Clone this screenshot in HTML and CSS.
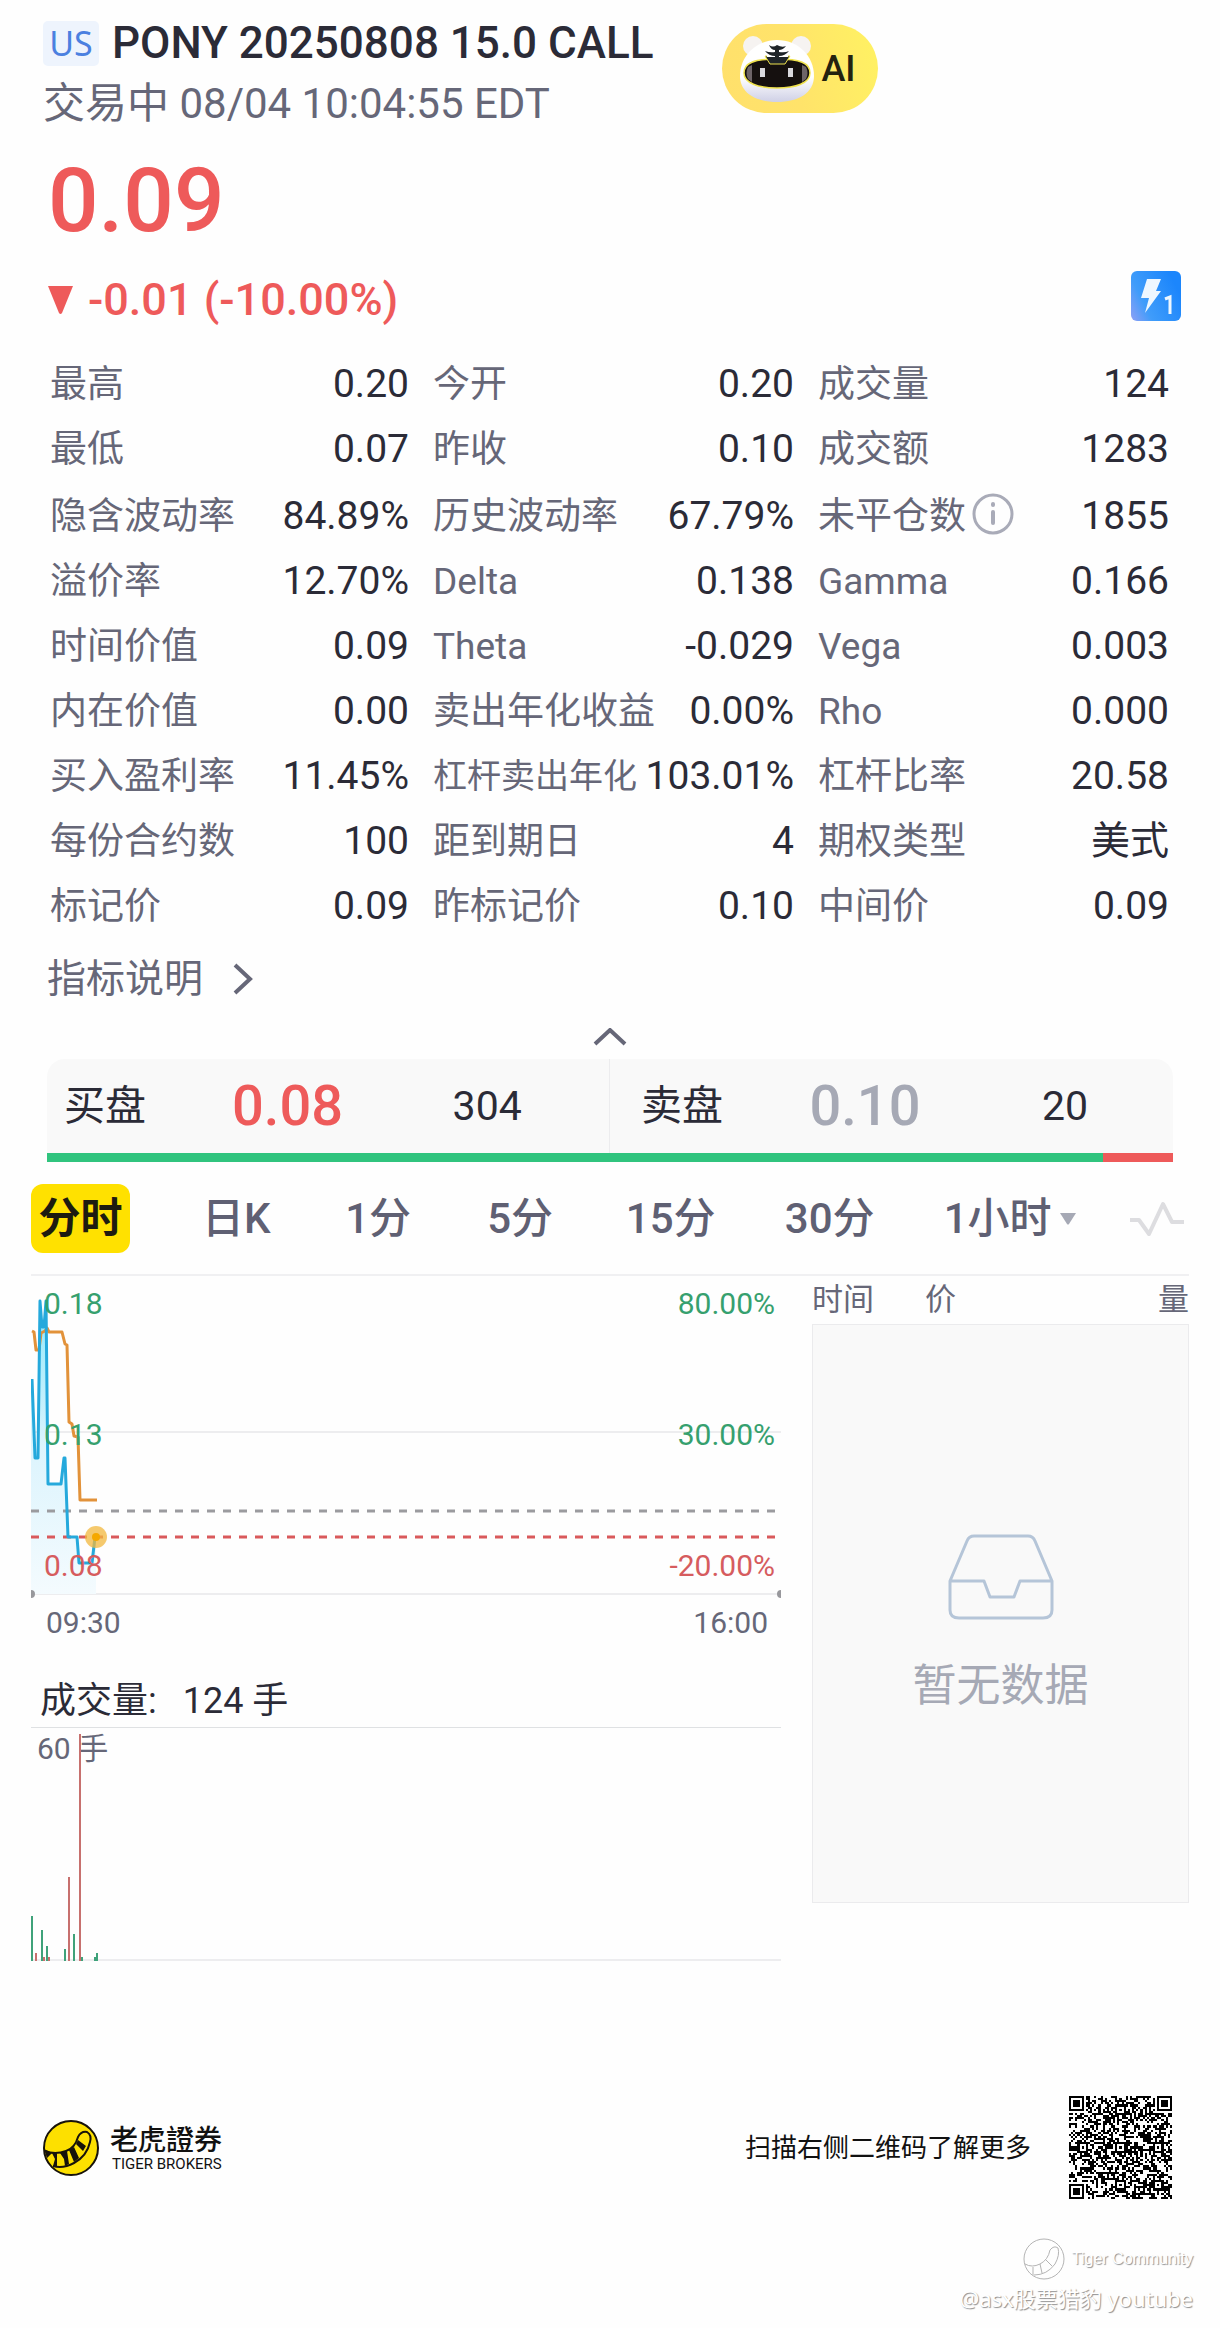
FILE: index.html
```html
<!DOCTYPE html>
<html lang="zh-CN">
<head>
    <meta charset="UTF-8">
    <meta name="viewport" content="width=device-width, initial-scale=1.0">
    <title>PONY 20250808 15.0 CALL</title>
    <link rel="stylesheet" href="styles.css">
</head>
<body>
    <header class="header">
        <div class="heading">
            <h1 class="title"><span class="market">US</span>PONY 20250808 15.0 CALL</h1>
            <p class="status">交易中 08/04 10:04:55 EDT</p>
        </div>
        <button class="ai-button" type="button">
            <svg class="ai-face" viewBox="0 0 74 66" aria-hidden="true">
                <defs>
                    <linearGradient id="face" x1="0" y1="0" x2="0" y2="1">
                        <stop offset="0.6" stop-color="#ffffff"/>
                        <stop offset="1" stop-color="#cfd0e6"/>
                    </linearGradient>
                </defs>
                <circle cx="13" cy="10" r="10" fill="#f6f3f1"/>
                <circle cx="61" cy="10" r="10" fill="#f6f3f1"/>
                <path d="M37 4C58 4 74 20 74 40C74 57 58 66 37 66C16 66 0 57 0 40C0 20 16 4 37 4Z" fill="url(#face)"/>
                <path d="M37 23C60 23 70 27 70 37C70 47 56 52 37 52C18 52 4 47 4 37C4 27 14 23 37 23Z" fill="#15100f" stroke="#efe24e" stroke-width="1.5"/>
                <path d="M25 20L30 28H45L50 20Z" fill="#1f2428" stroke="#efe24e" stroke-width="1"/>
                <path d="M27 19H48V21H27Z" fill="#fff"/>
                <path d="M29 9Q33 12 37 9Q42 12 46 10Q43 14 39 14V16Q45 17 49 15Q45 20 39 20V24H35V20Q29 20 25 15Q30 17 35 16V14Q31 14 29 9Z" fill="#1f2428"/>
                <path d="M8 31Q5 37 8 43L12 46V29ZM66 31Q69 37 66 43L62 46V29Z" fill="#6d6468"/>
                <rect x="20" y="32" width="5" height="9" fill="#d9d9dd"/>
                <rect x="48" y="32" width="5" height="9" fill="#d9d9dd"/>
            </svg>
            AI
        </button>
    </header>

    <section class="quote">
        <p class="price">0.09</p>
        <div class="change-row">
            <p class="change">
                <svg class="down" viewBox="0 0 25 28" aria-hidden="true"><path d="M0 0H25L14 27Q12.500 29 11 27Z"/></svg>
                -0.01 (-10.00%)
            </p>
            <svg class="level" viewBox="0 0 50 50" role="img" aria-label="L1">
                <defs>
                    <linearGradient id="level-bg" x1="0" y1="1" x2="1" y2="0.500">
                        <stop offset="0" stop-color="#8fa0f5"/>
                        <stop offset="0.350" stop-color="#3f9cfa"/>
                        <stop offset="1" stop-color="#1c86fc"/>
                    </linearGradient>
                </defs>
                <rect width="50" height="50" rx="6" fill="url(#level-bg)"/>
                <path d="M16 8H30L25 20H30L14 42L18 27H10Z" fill="#eef7ff"/>
                <path d="M34 28L39 26V43" fill="none" stroke="#eef7ff" stroke-width="3"/>
            </svg>
        </div>
    </section>

    <dl class="stats">
        <div><dt>最高</dt><dd>0.20</dd></div>
        <div><dt>今开</dt><dd>0.20</dd></div>
        <div><dt>成交量</dt><dd>124</dd></div>
        <div><dt>最低</dt><dd>0.07</dd></div>
        <div><dt>昨收</dt><dd>0.10</dd></div>
        <div><dt>成交额</dt><dd>1283</dd></div>
        <div><dt>隐含波动率</dt><dd>84.89%</dd></div>
        <div><dt>历史波动率</dt><dd>67.79%</dd></div>
        <div class="with-info">
            <dt>未平仓数<svg class="info" viewBox="0 0 42 42" aria-hidden="true"><circle cx="21" cy="21" r="19"/><path d="M21 19V30" stroke-width="4"/><path d="M21 11V12" stroke-width="4"/></svg></dt>
            <dd>1855</dd>
        </div>
        <div><dt>溢价率</dt><dd>12.70%</dd></div>
        <div><dt>Delta</dt><dd>0.138</dd></div>
        <div><dt>Gamma</dt><dd>0.166</dd></div>
        <div><dt>时间价值</dt><dd>0.09</dd></div>
        <div><dt>Theta</dt><dd>-0.029</dd></div>
        <div><dt>Vega</dt><dd>0.003</dd></div>
        <div><dt>内在价值</dt><dd>0.00</dd></div>
        <div><dt>卖出年化收益</dt><dd>0.00%</dd></div>
        <div><dt>Rho</dt><dd>0.000</dd></div>
        <div><dt>买入盈利率</dt><dd>11.45%</dd></div>
        <div><dt class="long">杠杆卖出年化</dt><dd>103.01%</dd></div>
        <div><dt>杠杆比率</dt><dd>20.58</dd></div>
        <div><dt>每份合约数</dt><dd>100</dd></div>
        <div><dt>距到期日</dt><dd>4</dd></div>
        <div><dt>期权类型</dt><dd>美式</dd></div>
        <div><dt>标记价</dt><dd>0.09</dd></div>
        <div><dt>昨标记价</dt><dd>0.10</dd></div>
        <div><dt>中间价</dt><dd>0.09</dd></div>
    </dl>

    <a class="explain" href="#">指标说明
        <svg viewBox="0 0 20 32" aria-hidden="true"><path d="M2 2L17 16L2 30"/></svg>
    </a>
    <button class="collapse" type="button" aria-label="收起">
        <svg viewBox="0 0 34 18" aria-hidden="true"><path d="M2 16L17 2L32 16"/></svg>
    </button>

    <section class="book">
        <div class="sides">
            <div class="side bid"><span>买盘</span><strong>0.08</strong><span class="qty">304</span></div>
            <div class="side ask"><span>卖盘</span><strong>0.10</strong><span class="qty">20</span></div>
        </div>
        <div class="ratio"><div class="ratio-bid" style="width: 93.8%"></div></div>
    </section>

    <nav class="tabs">
        <button class="tab active" type="button">分时</button>
        <button class="tab" type="button">日K</button>
        <button class="tab" type="button">1分</button>
        <button class="tab" type="button">5分</button>
        <button class="tab" type="button">15分</button>
        <button class="tab" type="button">30分</button>
        <button class="tab" type="button">1小时<svg class="more" viewBox="0 0 16 12" aria-hidden="true"><path d="M0 0H16L9 11Q8 12 7 11Z"/></svg></button>
        <button class="wave" type="button" aria-label="指标">
            <svg viewBox="0 0 56 38" aria-hidden="true"><path d="M1 20H10L20 34L34 4L43 22H55"/></svg>
        </button>
    </nav>

    <main class="market-data">
        <div class="charts">
            <svg class="chart" viewBox="0 0 750 365" role="img" aria-label="分时走势">
                <defs>
                    <linearGradient id="area" x1="0" y1="0" x2="0" y2="1">
                        <stop offset="0" stop-color="#8fe8fb"/>
                        <stop offset="0.500" stop-color="#dcf4fd"/>
                        <stop offset="1" stop-color="#f4fbfe"/>
                    </linearGradient>
                </defs>
                <path class="grid-line" d="M0 156H750M0 318H750"/>
                <path d="M1 103L4 182H7L9 25L11 51H13L15 25L17 208H30L33 182H34L37 261H46L48 287H61L64 261H65V318H0V103Z" fill="url(#area)"/>
                <path class="dash" d="M0 235H744" stroke="#9b9b9f"/>
                <path class="dash" d="M0 261H744" stroke="#d9595b"/>
                <path class="line" d="M1 55L3 56L5 74H8L10 57L14 55L16 52L18 56H31L34 68L36 69L38 146L41 148L43 160L47 161L49 224H66" stroke="#e2923a"/>
                <path class="line" d="M1 103L4 182H7L9 25L11 51H13L15 25L17 208H30L33 182H34L37 261H46L48 287H61L64 261" stroke="#25a9dc"/>
                <circle cx="65" cy="261" r="11" fill="#f2b73c" fill-opacity="0.750"/>
                <circle cx="65" cy="261" r="4" fill="#f5a800"/>
                <path d="M0 314A4 4 0 0 1 0 322ZM750 314A4 4 0 0 0 750 322Z" fill="#98989c"/>
                <g class="up">
                    <text x="13" y="38">0.18</text>
                    <text x="13" y="169">0.13</text>
                    <text class="end" x="744" y="38">80.00%</text>
                    <text class="end" x="744" y="169">30.00%</text>
                </g>
                <g class="fall">
                    <text x="13" y="300">0.08</text>
                    <text class="end" x="744" y="300">-20.00%</text>
                </g>
                <g class="axis">
                    <text x="15" y="357">09:30</text>
                    <text class="end" x="737" y="357">16:00</text>
                </g>
            </svg>

            <h2 class="volume-title">成交量:<span>124 手</span></h2>
            <svg class="chart volume" viewBox="0 0 750 233" role="img" aria-label="成交量">
                <path class="grid-line" d="M0 232H750"/>
                <g class="axis"><text x="6" y="31">60 手</text></g>
                <path d="M1 233V188M11 233V202M16 233V218M34 233V221M43 233V206M51 233V229M64 233V229M66 233V225" stroke="#3fa27a" stroke-width="2"/>
                <path d="M5 233V225M13 233V229M18 233V229M38 233V149M49 233V6" stroke="#c7706e" stroke-width="2"/>
            </svg>
        </div>

        <div class="ticks">
            <table>
                <thead>
                    <tr><th scope="col">时间</th><th scope="col">价</th><th scope="col">量</th></tr>
                </thead>
            </table>
            <div class="empty">
                <svg viewBox="0 0 106 86" aria-hidden="true">
                    <path d="M2 47L19 7Q21 2 26 2H80Q85 2 87 7L104 47V76Q104 84 95 84H11Q2 84 2 76ZM2 47H36L42 63H66L72 47H104"/>
                </svg>
                <p>暂无数据</p>
            </div>
        </div>
    </main>

    <footer class="footer">
        <div class="brand">
            <svg class="logo" viewBox="0 0 56 56" aria-hidden="true">
                <circle cx="28" cy="28" r="27" fill="#fde000" stroke="#17130a" stroke-width="2"/>
                <path d="M2 31Q12 35 23 31Q32 28 35 17Q38 11 44 12Q49 15 47 22Q44 36 31 43Q20 49 10 46" fill="none" stroke="#17130a" stroke-width="2"/>
                <path d="M1 29L9 33L4 38ZM9 33H14V46H10L12 39ZM17 33L24 31L26 44L22 46L21 39ZM26 30L31 27L36 38L31 42ZM33 24L35 20L43 26L40 31Z" fill="#17130a"/>
            </svg>
            <div class="brand-name">
                <p class="brand-cn" lang="zh-TW">老虎證券</p>
                <p class="brand-en">TIGER BROKERS</p>
            </div>
        </div>
        <p class="scan">扫描右侧二维码了解更多</p>
        <svg class="qr" viewBox="0 0 49 49" role="img" aria-label="二维码" shape-rendering="crispEdges"><path id="qr-path"/></svg>
    </footer>

    <div class="community">
        <p class="community-name">
            <svg viewBox="0 0 44 44" aria-hidden="true">
                <circle cx="22" cy="22" r="20"/>
                <path d="M3 27Q10 31 18 27Q26 23 28 13Q32 8 36 11Q38 18 33 27Q25 38 12 38M11 30V38M18 27L20 36M24 23L30 29"/>
            </svg>
            Tiger Community
        </p>
        <p class="author">@asx股票猎豹 youtube</p>
    </div>

    <script>
        const size = 49;
        const cells = [];
        let seed = 20250808;

        function random() {
            seed = (seed * 1103515245 + 12345) % 2147483648;
            return seed / 2147483648;
        }

        for (let y = 0; y < size; y++) {
            cells.push([]);
            for (let x = 0; x < size; x++) {
                cells[y].push(random() < 0.5);
            }
        }

        // timing lines
        for (let i = 0; i < size; i++) {
            cells[6][i] = i % 2 === 0;
            cells[i][6] = i % 2 === 0;
        }

        // concentric squares, the light ring is the one at distance `gap`
        function square(cx, cy, radius, gap) {
            for (let y = cy - radius; y <= cy + radius; y++) {
                for (let x = cx - radius; x <= cx + radius; x++) {
                    if (x < 0 || y < 0 || x >= size || y >= size) continue;
                    const d = Math.max(Math.abs(x - cx), Math.abs(y - cy));
                    cells[y][x] = d !== gap && d !== 4;
                }
            }
        }

        [[24, 6], [6, 24], [24, 24], [42, 24], [24, 42], [42, 42]].forEach(([x, y]) => square(x, y, 2, 1));
        [[3, 3], [45, 3], [3, 45]].forEach(([x, y]) => square(x, y, 4, 2));

        let d = '';
        cells.forEach((row, y) => row.forEach((on, x) => {
            if (on) d += `M${x} ${y}h1v1h-1z`;
        }));
        document.getElementById('qr-path').setAttribute('d', d);
    </script>
</body>
</html>
```
FILE: styles.css
```css
* {
    box-sizing: border-box;
}

body {
    margin: 0;
    background: #fefefe;
    color: #2b2b37;
    font-family: Roboto, "Noto Sans CJK SC", sans-serif;
}

h1, h2, p, dl, dd {
    margin: 0;
}

button {
    padding: 0;
    border: 0;
    background: none;
    color: inherit;
    font-family: inherit;
    cursor: pointer;
}

svg {
    display: block;
    flex: none;
}

/* Header */
.header {
    display: flex;
    gap: 69px;
    padding: 18px 43px 0;
}

.title {
    display: flex;
    align-items: center;
    gap: 13px;
    font-size: 44px;
    font-weight: 500;
    line-height: 50px;
}

.market {
    width: 56px;
    border-radius: 5px;
    background: #eef4fd;
    color: #4b80e0;
    font-family: "Noto Sans", sans-serif;
    font-size: 34px;
    font-weight: 400;
    line-height: 45px;
    text-align: center;
}

.status {
    margin-top: 6px;
    color: #666778;
    font-size: 42px;
    line-height: 60px;
}

.ai-button {
    display: flex;
    align-items: center;
    gap: 7px;
    width: 156px;
    height: 89px;
    margin-top: 6px;
    padding-left: 18px;
    border-radius: 45px;
    background: linear-gradient(75deg, #ffe06c, #ffe36a 45%, #fff262);
    color: #24220f;
    font-size: 36px;
    font-weight: 500;
}

.ai-face {
    width: 74px;
    height: 66px;
}

/* Price */
.quote {
    padding: 19px 39px 0 48px;
    color: #ee5a5a;
}

.price {
    font-size: 89px;
    font-weight: 500;
    line-height: 96px;
}

.change-row {
    display: flex;
    justify-content: space-between;
    margin-top: 22px;
}

.change {
    display: flex;
    align-items: center;
    gap: 15px;
    font-size: 45px;
    font-weight: 500;
    line-height: 58px;
}

.down {
    width: 25px;
    height: 28px;
    fill: #ee5a5a;
}

.level {
    width: 50px;
    height: 50px;
}

/* Indicators */
.stats {
    display: grid;
    grid-template-columns: 359fr 361fr 351fr;
    column-gap: 24px;
    margin-top: 23px;
    padding: 0 51px 0 50px;
}

.stats div {
    display: flex;
    align-items: flex-end;
    justify-content: space-between;
    line-height: 65px;
    white-space: nowrap;
}

.stats dt {
    display: flex;
    align-items: center;
    color: #666778;
    font-size: 37px;
}

.stats .long {
    font-size: 34px;
}

.stats dd {
    font-size: 39px;
}

.stats .with-info {
    padding-top: 2px;
}

.info {
    width: 42px;
    height: 42px;
    margin: 0 0 5px 6px;
    fill: none;
    stroke: #a9abb8;
    stroke-width: 3;
    stroke-linecap: round;
}

.explain {
    display: flex;
    align-items: center;
    gap: 30px;
    width: max-content;
    margin: 14px 0 0 47px;
    color: #666778;
    font-size: 39px;
    line-height: 52px;
    text-decoration: none;
}

.explain svg {
    width: 20px;
    height: 32px;
}

.explain path,
.collapse path {
    fill: none;
    stroke: #666778;
    stroke-width: 4;
}

.collapse {
    display: block;
    margin: 23px auto 13px;
}

.collapse svg {
    width: 34px;
    height: 18px;
}

/* Bid and ask */
.book {
    margin: 0 47px;
}

.sides {
    display: grid;
    grid-template-columns: 1fr 1fr;
    border-radius: 18px 18px 0 0;
    background: #f9f9f9;
}

.side {
    display: grid;
    grid-template-columns: 124fr 200fr 200fr;
    font-size: 41px;
    line-height: 94px;
}

.bid {
    padding: 0 22px 0 17px;
    border-right: 1px solid #ececee;
}

.ask {
    padding: 0 8px 0 31px;
}

.side strong {
    font-size: 56px;
    font-weight: 500;
    text-align: center;
}

.bid strong {
    color: #ee5a5a;
}

.ask strong {
    color: #a6a9b5;
}

.qty {
    text-align: center;
}

.ratio {
    height: 9px;
    background: #ee5a5a;
}

.ratio-bid {
    height: 100%;
    background: #30c47e;
}

/* Period tabs */
.tabs {
    display: flex;
    align-items: center;
    gap: 70px;
    margin: 22px 31px 0;
    padding-bottom: 21px;
    border-bottom: 2px solid #f0f0f2;
}

.tab {
    display: flex;
    align-items: center;
    justify-content: center;
    gap: 8px;
    min-width: 72px;
    color: #5f6073;
    font-size: 42px;
    font-weight: 500;
    line-height: 69px;
    white-space: nowrap;
}

.tab.active {
    width: 100px;
    border-radius: 12px;
    background: #ffe100;
    color: #1d1b10;
    font-weight: 700;
}

.more {
    width: 16px;
    height: 12px;
    fill: #a6a9b5;
}

.wave {
    margin: 0 4px 0 -16px;
}

.wave svg {
    width: 56px;
    height: 38px;
    fill: none;
    stroke: #dddde0;
    stroke-width: 4;
    stroke-linejoin: round;
}

/* Charts */
.market-data {
    display: grid;
    grid-template-columns: 750fr 377fr;
    align-items: start;
    column-gap: 31px;
    margin: 0 31px;
}

.chart {
    width: 100%;
    height: auto;
    font-size: 30px;
}

.grid-line {
    stroke: #ededef;
    stroke-width: 2;
}

.dash {
    stroke-width: 3;
    stroke-dasharray: 8 8;
}

.line {
    fill: none;
    stroke-width: 3;
    stroke-linejoin: round;
}

.end {
    text-anchor: end;
}

.up {
    fill: #36a06e;
}

.fall {
    fill: #d65c5e;
}

.axis {
    fill: #666778;
}

.volume-title {
    display: flex;
    gap: 26px;
    margin-top: 34px;
    padding-left: 9px;
    font-size: 36px;
    font-weight: 400;
    line-height: 52px;
}

.volume {
    border-top: 1px solid #dfe1e3;
}

.ticks table {
    width: 100%;
    border-collapse: collapse;
    table-layout: fixed;
    color: #666778;
    font-size: 31px;
    line-height: 48px;
}

.ticks th {
    padding: 0;
    font-weight: 400;
    text-align: left;
}

.ticks th:first-child {
    width: 30%;
}

.ticks th:last-child {
    text-align: right;
}

.empty {
    display: flex;
    flex-direction: column;
    align-items: center;
    gap: 34px;
    padding: 209px 0 184px;
    border: 1px solid #ebebed;
    background: #f9f9f9;
    color: #a6a9b5;
    font-size: 44px;
    line-height: 64px;
}

.empty svg {
    width: 106px;
    height: 86px;
    fill: none;
    stroke: #b5c5d8;
    stroke-width: 3;
    stroke-linejoin: round;
}

/* Footer */
.footer {
    display: flex;
    align-items: center;
    margin-top: 135px;
    padding: 0 48px 0 43px;
    color: #111;
}

.brand {
    display: flex;
    align-items: center;
    gap: 11px;
}

.logo {
    width: 56px;
    height: 56px;
}

.brand-cn {
    font-family: "Noto Sans CJK TC", sans-serif;
    font-size: 28px;
    font-weight: 500;
    line-height: 32px;
}

.brand-en {
    padding-left: 2px;
    font-size: 15px;
    line-height: 20px;
}

.scan {
    margin-left: auto;
    font-size: 26px;
    line-height: 32px;
}

.qr {
    width: 103px;
    height: 103px;
    margin-left: 38px;
}

.community {
    display: flex;
    flex-direction: column;
    align-items: flex-end;
    margin-top: 38px;
    padding-right: 27px;
    color: #fff;
    text-shadow: 1px 1px 1px #8f8f8f;
}

.community-name {
    display: flex;
    align-items: center;
    gap: 6px;
    font-family: "Liberation Sans", sans-serif;
    font-size: 16px;
}

.community svg {
    width: 44px;
    height: 44px;
    fill: none;
    stroke: #b4b4b4;
    stroke-width: 1;
}

.author {
    font-family: "Noto Sans", "Noto Sans CJK SC", sans-serif;
    font-size: 22px;
    line-height: 34px;
}
```
